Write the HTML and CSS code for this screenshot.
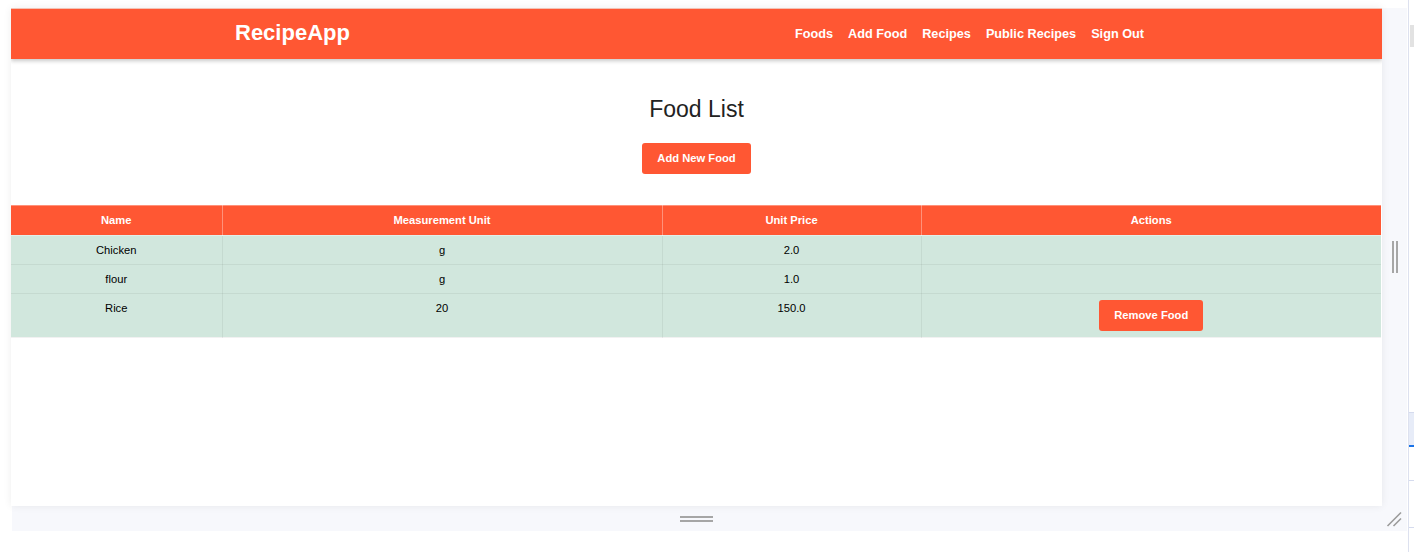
FILE: index.html
```html
<!DOCTYPE html>
<html lang="en">
<head>
<meta charset="utf-8">
<title>RecipeApp - Food List</title>
<link rel="stylesheet" href="styles.css">
</head>
<body>
<div class="shell">
  <div class="stage">
    <div class="stage-row">
      <div class="frame">
        <nav class="navbar">
          <a class="brand" href="#">RecipeApp</a>
          <ul class="nav-links">
            <li><a href="#">Foods</a></li>
            <li><a href="#">Add Food</a></li>
            <li><a href="#">Recipes</a></li>
            <li><a href="#">Public Recipes</a></li>
            <li><a href="#">Sign Out</a></li>
          </ul>
        </nav>
        <main class="content">
          <h2 class="title">Food List</h2>
          <div class="actions-top">
            <a class="btn" href="#">Add New Food</a>
          </div>
          <table class="food-table">
            <thead>
              <tr>
                <th class="c-name">Name</th>
                <th class="c-unit">Measurement Unit</th>
                <th class="c-price">Unit Price</th>
                <th class="c-actions">Actions</th>
              </tr>
            </thead>
            <tbody>
              <tr><td>Chicken</td><td>g</td><td>2.0</td><td></td></tr>
              <tr><td>flour</td><td>g</td><td>1.0</td><td></td></tr>
              <tr><td>Rice</td><td>20</td><td>150.0</td><td class="cell-btn"><a class="btn" href="#">Remove Food</a></td></tr>
            </tbody>
          </table>
        </main>
      </div>
      <div class="side-handle"><span class="grip-v"></span></div>
    </div>
    <div class="bottom-bar">
      <div class="bottom-handle-area"><span class="grip-h"></span></div>
      <div class="corner">
        <svg width="16" height="16" viewBox="0 0 16 16" aria-hidden="true">
          <line x1="1.5" y1="15" x2="15" y2="1.5" stroke="#9a9a9a" stroke-width="1.6"/>
          <line x1="7.5" y1="15" x2="15" y2="7.5" stroke="#9a9a9a" stroke-width="1.6"/>
        </svg>
      </div>
    </div>
  </div>
  <div class="edge">
    <span class="edge-thumb"></span>
    <span class="edge-sel"></span>
    <span class="edge-mark"></span>
    <span class="edge-mark2"></span>
  </div>
</div>
</body>
</html>
```
FILE: styles.css
```css
* { box-sizing: border-box; }
html, body {
  margin: 0;
  padding: 0;
  background: #ffffff;
  width: 1414px;
  height: 552px;
  overflow: hidden;
  font-family: "Liberation Sans", Arial, sans-serif;
}
.shell {
  display: flex;
  height: 552px;
}
.stage {
  width: 1408px;
  padding: 8px 0 0 11px;
}
.stage-row {
  display: flex;
  height: 498px;
}
.frame {
  width: 1371px;
  background: #fff;
  box-shadow: 0 0 8px rgba(0, 0, 0, 0.07);
  overflow: hidden;
  position: relative;
}
.navbar {
  height: 51px;
  background: #ff5733;
  display: flex;
  align-items: center;
  justify-content: space-between;
  padding: 0 238px 1px 224px;
  box-shadow: 0 2px 4px rgba(0, 0, 0, 0.22), inset 0 1px 0 #f3c2b5;
  position: relative;
}
.brand {
  color: #fff;
  text-decoration: none;
  font-weight: bold;
  font-size: 22px;
  letter-spacing: 0px;
}
.nav-links {
  list-style: none;
  margin: 0;
  padding: 0;
  display: flex;
  gap: 15px;
}
.nav-links a {
  color: #fff;
  text-decoration: none;
  font-weight: bold;
  font-size: 12.7px;
}
.content {
  padding-top: 37px;
}
.title {
  margin: 0;
  text-align: center;
  font-weight: normal;
  font-size: 23px;
  line-height: 27.6px;
  color: #222;
}
.actions-top {
  display: flex;
  justify-content: center;
  margin-top: 19px;
  margin-bottom: 31px;
}
.btn {
  display: inline-block;
  background: #ff5733;
  color: #fff;
  text-decoration: none;
  font-weight: bold;
  font-size: 11.2px;
  line-height: 13px;
  padding: 9px 15px;
  border-radius: 3px;
}
.food-table {
  width: 1370px;
  border-collapse: collapse;
  font-size: 11.2px;
  text-align: center;
}
.food-table th {
  background: #ff5733;
  color: #fff;
  font-weight: bold;
  padding: 6px 8px;
  line-height: 17px;
  border: 1px solid rgba(255, 255, 255, 0.35);
}
.food-table td {
  background: #d1e7dd;
  color: #000;
  padding: 6px 8px;
  line-height: 16px;
  vertical-align: top;
  border: 1px solid rgba(0, 0, 0, 0.055);
}
.food-table td.cell-btn {
  padding-top: 6px;
  padding-bottom: 6px;
}
.food-table th:first-child, .food-table td:first-child { border-left: none; }
.food-table th:last-child, .food-table td:last-child { border-right: none; }
.c-name { width: 211px; }
.c-unit { width: 440px; }
.c-price { width: 259px; }
.c-actions { width: 460px; }

.side-handle {
  width: 25px;
  background: #f7f8fc;
  display: flex;
  align-items: center;
  justify-content: center;
}
.grip-v {
  width: 6px;
  height: 32px;
  border-left: 2px solid #a6a6a6;
  border-right: 2px solid #a6a6a6;
}
.bottom-bar {
  display: flex;
  height: 25px;
  margin-left: 1px;
  background: #f7f8fc;
}
.bottom-handle-area {
  width: 1369px;
  display: flex;
  align-items: center;
  justify-content: center;
}
.grip-h {
  width: 33px;
  height: 6px;
  border-top: 2px solid #a6a6a6;
  border-bottom: 2px solid #a6a6a6;
}
.corner {
  flex: 1;
  display: flex;
  align-items: center;
  justify-content: center;
}
.edge {
  width: 6px;
  border-left: 1px solid #dde1ef;
  margin-left: 1px;
  position: relative;
}
.edge-thumb {
  position: absolute;
  left: 1px;
  right: 0;
  top: 25px;
  height: 22px;
  background: #e2e2e2;
}
.edge-sel {
  position: absolute;
  left: 0;
  right: 0;
  top: 412px;
  height: 35px;
  background: #e7ecf8;
  border-top: 1px solid #d5dbee;
  border-bottom: 2px solid #1a73e8;
}
.edge-mark {
  position: absolute;
  left: 0;
  right: 0;
  top: 480px;
  height: 1px;
  background: #d5dbee;
}
.edge-mark2 {
  position: absolute;
  left: 0;
  right: 0;
  top: 527px;
  height: 1px;
  background: #d5dbee;
}
```
